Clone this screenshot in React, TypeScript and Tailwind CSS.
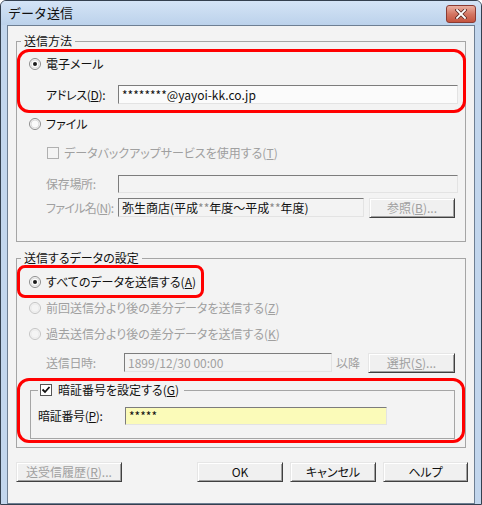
import React from "react";

const font = {
  fontFamily: '"Noto Sans CJK JP", "Noto Sans", sans-serif',
};

const Radio = ({ checked = false, disabled = false }: { checked?: boolean; disabled?: boolean }) => (
  <svg width="12" height="12" viewBox="0 0 12 12" className="shrink-0">
    <circle cx="6" cy="6" r="5.5" fill={disabled ? "#f4f4f4" : "#fbfbfb"} stroke={disabled ? "#c4c4c4" : "#8c8c8c"} />
    <circle cx="6" cy="6" r="4" fill="none" stroke={disabled ? "#ececec" : "#dcdcdc"} />
    {checked && <circle cx="6" cy="6" r="2" fill="#1a1a1a" />}
  </svg>
);

const Check = ({ checked = false, disabled = false }: { checked?: boolean; disabled?: boolean }) => (
  <svg width="12" height="12" viewBox="0 0 12 12" className="shrink-0">
    <rect x="0.5" y="0.5" width="11" height="11" fill={disabled ? "#f4f4f4" : "#fff"} stroke={disabled ? "#b0b0b0" : "#555"} />
    {checked && <path d="M2.5 5.5 L5 8 L9.5 3" fill="none" stroke="#111" strokeWidth="1.8" />}
  </svg>
);

const fieldCls =
  "h-full border border-t-[#7c7c7c] border-l-[#7c7c7c] border-b-[#e3e3e3] border-r-[#e3e3e3] px-[3px] flex items-center text-[12px] leading-[14px] whitespace-nowrap overflow-hidden";

const btnCls =
  "h-[20px] flex items-center justify-center whitespace-nowrap bg-[#f0f0f0] border border-t-[#e6e6e6] border-l-[#e6e6e6] border-r-[#404040] border-b-[#404040] shadow-[inset_1px_1px_#ffffff,inset_-1px_-1px_#a0a0a0] text-[12px] leading-[14px]";

const labelCls = "shrink-0 whitespace-nowrap tracking-[-0.3px]";

export default function App() {
  return (
    <div style={font} className="w-[482px] h-[505px] border border-[#34404f] rounded-t-[6px] bg-[#c2d6ed] flex flex-col [font-feature-settings:'palt'] text-[#111]">
      {/* Title bar */}
      <div className="h-[24px] shrink-0 flex items-start justify-between pl-[7px] pr-[5px] rounded-t-[5px] bg-linear-to-b from-[#d4e4f6] to-[#bcd2eb]">
        <span className="text-[13px] leading-[14px] mt-[5px] [font-feature-settings:normal]">データ送信</span>
        <div className="mt-[4px] w-[30px] h-[18px] rounded-[3px] border border-[#8a3b33] bg-linear-to-b from-[#eab0a2] via-[#d47663] to-[#c4543f] flex items-center justify-center">
          <svg width="12" height="10" viewBox="0 0 12 10">
            <path d="M2 1 L10 9 M10 1 L2 9" stroke="#5a2a24" strokeWidth="3.4" strokeLinecap="square" />
            <path d="M2 1 L10 9 M10 1 L2 9" stroke="#fff" strokeWidth="1.8" strokeLinecap="square" />
          </svg>
        </div>
      </div>

      {/* Client area */}
      <div className="relative mx-[6px] flex-1 border border-[#6e7f93] bg-[#f3f3f3] pt-2 text-[12px] leading-[14px] whitespace-nowrap">
        {/* 送信方法 */}
        <fieldset className="mx-2 border border-[#a5a5a5]">
          <legend className="ml-1 px-[3px] leading-[14px]">送信方法</legend>
          <div className="pl-3 pr-[7px] pb-[24px]">
            <div className="mt-[9px] h-[14px] flex items-center gap-[5px]">
              <Radio checked />
              <span>電子メール</span>
            </div>
            <div className="mt-[14px] h-[19px] flex items-center pl-[17px]">
              <span className={`${labelCls} w-[72px]`}>アドレス(<u>D</u>):</span>
              <div className={`${fieldCls} flex-1 bg-[#fbfbfb]`}>********@yayoi-kk.co.jp</div>
            </div>
            <div className="mt-[13px] h-[14px] flex items-center gap-[5px]">
              <Radio />
              <span>ファイル</span>
            </div>
            <div className="mt-[15px] h-[14px] flex items-center gap-[5px] pl-[18px] text-[#a0a0a0]">
              <Check disabled />
              <span>データバックアップサービスを使用する(<u>T</u>)</span>
            </div>
            <div className="mt-[15px] h-[18px] flex items-center pl-[17px]">
              <span className={`${labelCls} w-[72px] text-[#a0a0a0]`}>保存場所:</span>
              <div className={`${fieldCls} flex-1 bg-[#f3f3f3]`}></div>
            </div>
            <div className="mt-[5px] h-[19px] flex items-center pl-[17px]">
              <span className="w-[72px] shrink-0 whitespace-nowrap tracking-[-0.7px] text-[#a0a0a0]">ファイル名(<u>N</u>):</span>
              <div className={`${fieldCls} w-[246px] bg-[#f3f3f3]`}>
                弥生商店(平成<span className="text-[#8a8a8a]">**</span>年度〜平成<span className="text-[#8a8a8a]">**</span>年度)
              </div>
              <div className={`${btnCls} w-[86px] ml-[5px] text-[#a0a0a0]`}>参照(<u>B</u>)...</div>
            </div>
          </div>
        </fieldset>

        {/* 送信するデータの設定 */}
        <fieldset className="mx-2 mt-[9px] border border-[#a5a5a5]">
          <legend className="ml-1 px-[3px] leading-[14px]">送信するデータの設定</legend>
          <div className="pl-3 pr-[7px] pb-[8px]">
            <div className="mt-[10px] h-[14px] flex items-center gap-[5px]">
              <Radio checked />
              <span>すべてのデータを送信する(<u>A</u>)</span>
            </div>
            <div className="mt-[12px] h-[14px] flex items-center gap-[5px] text-[#a0a0a0]">
              <Radio disabled />
              <span>前回送信分より後の差分データを送信する(<u>Z</u>)</span>
            </div>
            <div className="mt-[12px] h-[14px] flex items-center gap-[5px] text-[#a0a0a0]">
              <Radio disabled />
              <span>過去送信分より後の差分データを送信する(<u>K</u>)</span>
            </div>
            <div className="mt-[12px] h-[19px] flex items-center pl-[17px] text-[#a0a0a0]">
              <span className={`${labelCls} w-[78px]`}>送信日時:</span>
              <div className={`${fieldCls} w-[208px] bg-[#f3f3f3]`}>1899/12/30 00:00</div>
              <span className="ml-[4px] w-[28px]">以降</span>
              <div className={`${btnCls} w-[87px] ml-[4px]`}>選択(<u>S</u>)...</div>
            </div>

            <fieldset className="mt-[11px] ml-[1px] mr-[3px] border border-[#a5a5a5]">
              <legend className="ml-[7px] pl-[2px] pr-[5px] leading-[14px]">
                <span className="flex items-center gap-[6px]">
                  <Check checked />
                  <span>暗証番号を設定する(<u>G</u>)</span>
                </span>
              </legend>
              <div className="pl-[7px] pb-[13px]">
                <div className="mt-[10px] h-[18px] flex items-center">
                  <span className={`${labelCls} w-[87px]`}>暗証番号(<u>P</u>):</span>
                  <div className={`${fieldCls} w-[262px] bg-[#fbfbb9]`}>*****</div>
                </div>
              </div>
            </fieldset>
          </div>
        </fieldset>

        {/* Buttons */}
        <div className="mt-[14px] flex items-center justify-between pl-2 pr-[6px]">
          <div className={`${btnCls} w-[106px] text-[#a0a0a0]`}>送受信履歴(<u>R</u>)...</div>
          <div className="flex gap-[7px]">
            <div className={`${btnCls} w-[86px] border-[#1e1e1e]`}>OK</div>
            <div className={`${btnCls} w-[86px]`}>キャンセル</div>
            <div className={`${btnCls} w-[85px]`}>ヘルプ</div>
          </div>
        </div>

        {/* red annotation outlines */}
        <div className="absolute left-[9px] top-[23px] w-[449px] h-[64px] border-[3px] border-[#ff0000] rounded-[12px]" />
        <div className="absolute left-[9px] top-[239px] w-[187px] h-[33px] border-[3px] border-[#ff0000] rounded-[8px]" />
        <div className="absolute left-[9px] top-[352px] w-[448px] h-[65px] border-[3px] border-[#ff0000] rounded-[12px]" />
      </div>
    </div>
  );
}
